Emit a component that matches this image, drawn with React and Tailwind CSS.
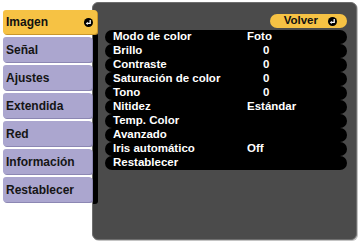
import React from "react";

const font = { fontFamily: '"Liberation Sans", Arial, sans-serif' };

const tabs = ["Imagen", "Señal", "Ajustes", "Extendida", "Red", "Información", "Restablecer"];

const rows = [
  ["Modo de color", "Foto", false],
  ["Brillo", "0", true],
  ["Contraste", "0", true],
  ["Saturación de color", "0", true],
  ["Tono", "0", true],
  ["Nitidez", "Estándar", false],
  ["Temp. Color", "", false],
  ["Avanzado", "", false],
  ["Iris automático", "Off", false],
  ["Restablecer", "", false],
];

function EnterIcon() {
  return (
    <svg width="9" height="9" viewBox="0 0 9 9" className="shrink-0">
      <circle cx="4.5" cy="4.5" r="4.5" fill="#000" />
      <path d="M6.2 2.1v3.3H3.4" stroke="#fff" strokeWidth="1.3" fill="none" />
      <path d="M1.8 5.4 3.8 3.7v3.4z" fill="#fff" />
    </svg>
  );
}

export default function App() {
  return (
    <div
      className="flex w-[360px] h-[243px] bg-white pt-[2px] pl-[3px] overflow-hidden"
      style={font}
    >
      {/* Tabs */}
      <div className="relative z-10 flex w-[89px] shrink-0 flex-col gap-[3px] pt-[8px]">
        {tabs.map((t, i) =>
          i === 0 ? (
            <div
              key={t}
              className="flex h-[24px] w-[94px] items-center justify-between rounded-[3px] bg-[#f6c244] pl-[3px] pr-[4px] text-[12px] font-bold text-[#111] shadow-[1px_1px_0_#c9962a]"
            >
              <span>{t}</span>
              <EnterIcon />
            </div>
          ) : (
            <div
              key={t}
              className="flex h-[25px] w-[89px] items-center rounded-[3px] bg-[#aba6cf] pl-[3px] text-[12px] font-bold text-[#151515] shadow-[1px_1px_0_#8c87b3]"
            >
              {t}
            </div>
          )
        )}
      </div>

      {/* Panel */}
      <div className="flex h-[238px] w-[265px] shrink-0 rounded-[6px] border border-[#6e6e6e] bg-[#4b4b4b] shadow-[1px_1px_0_#c4c4c4]">
        <div className="mt-[30px] h-[171px] w-[5px] shrink-0 rounded-r-[3px] bg-black" />
        <div className="flex flex-1 flex-col pl-[7px] pr-[9px] pt-[11px]">
          <div className="flex justify-end">
            <div className="flex h-[14px] w-[77px] items-center justify-end gap-[10px] rounded-full bg-[#f6c244] pr-[10px] text-[11.5px] font-bold text-[#111]">
              <span>Volver</span>
              <EnterIcon />
            </div>
          </div>
          <div className="mt-[2px] flex flex-col">
            {rows.map(([label, value, num]) => (
              <div
                key={label}
                className="flex h-[14px] items-center rounded-full bg-black pl-[8px] text-[11.5px] font-bold leading-none text-white"
              >
                <span className="w-[134px] shrink-0 whitespace-nowrap">{label}</span>
                <span className={num ? "pl-[16px]" : ""}>{value}</span>
              </div>
            ))}
          </div>
        </div>
      </div>
    </div>
  );
}
